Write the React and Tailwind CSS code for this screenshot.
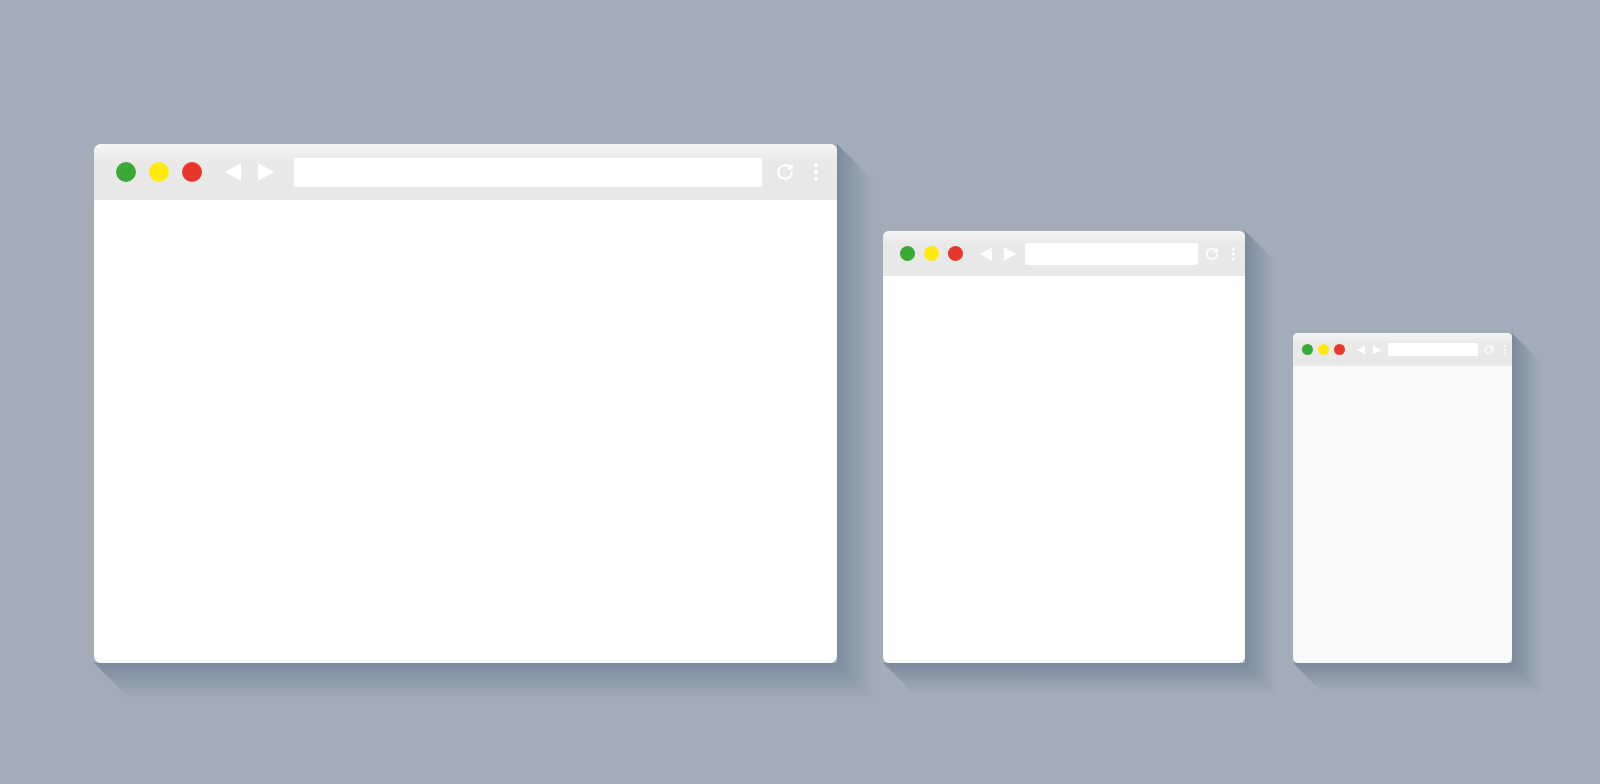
import React from 'react';
import { RotateCw } from 'lucide-react';

// three sizes of the same browser window, every class written out in full
const sizes = {
    lg: {
        win: 'w-[743px] h-[519px] rounded-[7px]',
        body: 'bg-white',
        bar: 'h-[56px] pl-[22px] pr-[19px]',
        light: 'w-[20px] h-[20px]',
        lights: 'gap-[13px]',
        nav: 'ml-[23px] gap-[17px]',
        tri: 'w-[16px] h-[18px]',
        url: 'ml-[20px] h-[29px] rounded-[2px]',
        reload: 'ml-[14px] w-[18px] h-[18px]',
        more: 'ml-[20px] w-[4px] h-[18px]',
        shadowR: 'w-[36px] h-[calc(100%+36px)] [clip-path:polygon(0_0,100%_36px,100%_100%,0_calc(100%-36px))]',
        shadowB: 'h-[36px] w-[calc(100%+36px)] [clip-path:polygon(0_0,calc(100%-36px)_0,100%_100%,36px_100%)]',
    },
    md: {
        win: 'w-[362px] h-[432px] rounded-[6px]',
        body: 'bg-white',
        bar: 'h-[45px] pl-[17px] pr-[10px]',
        light: 'w-[15px] h-[15px]',
        lights: 'gap-[9px]',
        nav: 'ml-[17px] gap-[12px]',
        tri: 'w-[12px] h-[14px]',
        url: 'ml-[9px] h-[22px] rounded-[2px]',
        reload: 'ml-[7px] w-[14px] h-[14px]',
        more: 'ml-[13px] w-[3px] h-[14px]',
        shadowR: 'w-[32px] h-[calc(100%+32px)] [clip-path:polygon(0_0,100%_32px,100%_100%,0_calc(100%-32px))]',
        shadowB: 'h-[32px] w-[calc(100%+32px)] [clip-path:polygon(0_0,calc(100%-32px)_0,100%_100%,32px_100%)]',
    },
    sm: {
        win: 'w-[219px] h-[330px] rounded-[5px]',
        body: 'bg-[#f9f9f9]',
        bar: 'h-[33px] pl-[9px] pr-[6px]',
        light: 'w-[11px] h-[11px]',
        lights: 'gap-[5px]',
        nav: 'ml-[12px] gap-[8px]',
        tri: 'w-[8px] h-[10px]',
        url: 'ml-[7px] h-[13px] rounded-[1px]',
        reload: 'ml-[6px] w-[10px] h-[10px]',
        more: 'ml-[10px] w-[2px] h-[10px]',
        shadowR: 'w-[30px] h-[calc(100%+30px)] [clip-path:polygon(0_0,100%_30px,100%_100%,0_calc(100%-30px))]',
        shadowB: 'h-[30px] w-[calc(100%+30px)] [clip-path:polygon(0_0,calc(100%-30px)_0,100%_100%,30px_100%)]',
    },
};

function Triangle({ dir, className }) {
    return (
        <svg viewBox="0 0 16 18" className={className}>
            {dir === 'left'
                ? <polygon points="16,0 16,18 0,9" fill="#fff" />
                : <polygon points="0,0 0,18 16,9" fill="#fff" />}
        </svg>
    );
}

function MoreDots({ className }) {
    return (
        <svg viewBox="0 0 4 18" className={className}>
            <circle cx="2" cy="2" r="2" fill="#fff" />
            <circle cx="2" cy="9" r="2" fill="#fff" />
            <circle cx="2" cy="16" r="2" fill="#fff" />
        </svg>
    );
}

function BrowserWindow({ size, className = '' }) {
    const s = sizes[size];
    return (
        <div className={`relative shrink-0 ${className}`}>
            {/* long flat shadow */}
            <div className={`absolute left-full top-0 bg-linear-to-r from-[rgba(72,92,114,0.42)] to-[rgba(72,92,114,0)] ${s.shadowR}`} />
            <div className={`absolute top-full left-0 bg-linear-to-b from-[rgba(72,92,114,0.42)] to-[rgba(72,92,114,0)] ${s.shadowB}`} />

            <div className={`relative flex flex-col overflow-hidden ${s.win} ${s.body}`}>
                <div className={`flex items-center shrink-0 bg-linear-to-b from-[#f5f5f5] via-[#e9e9e9] via-30% to-[#e8e8e8] ${s.bar}`}>
                    <div className={`flex items-center ${s.lights}`}>
                        <span className={`rounded-full bg-[#3aa935] ${s.light}`} />
                        <span className={`rounded-full bg-[#ffe90f] ${s.light}`} />
                        <span className={`rounded-full bg-[#e9372d] ${s.light}`} />
                    </div>
                    <div className={`flex items-center ${s.nav}`}>
                        <Triangle dir="left" className={s.tri} />
                        <Triangle dir="right" className={s.tri} />
                    </div>
                    <div className={`flex-1 bg-white ${s.url}`} />
                    <RotateCw className={`text-white shrink-0 ${s.reload}`} strokeWidth={2.6} />
                    <MoreDots className={`shrink-0 ${s.more}`} />
                </div>
                <div className="flex-1" />
            </div>
        </div>
    );
}

export default function App() {
    return (
        <div className="w-full h-[784px] overflow-hidden bg-[#a2adb9] flex items-end pl-[94px] pb-[121px]">
            <BrowserWindow size="lg" />
            <BrowserWindow size="md" className="ml-[46px]" />
            <BrowserWindow size="sm" className="ml-[48px]" />
        </div>
    );
}
